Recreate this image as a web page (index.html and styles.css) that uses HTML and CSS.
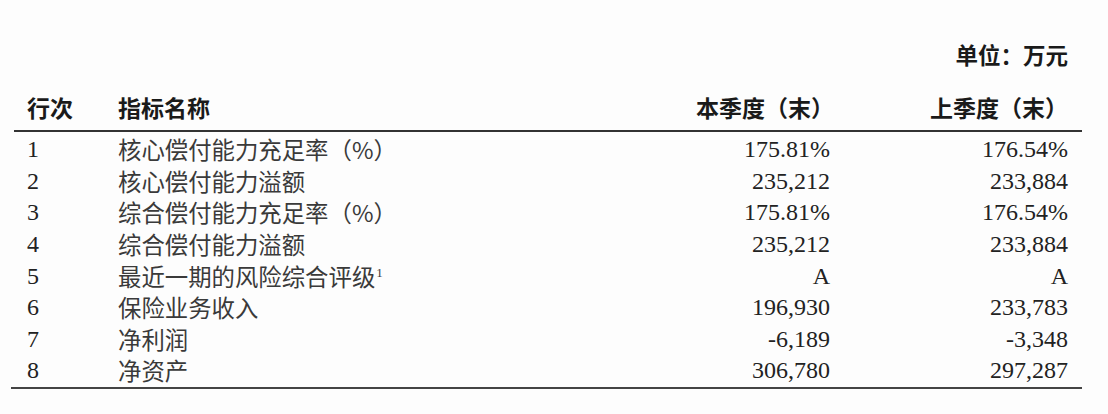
FILE: index.html
```html
<!DOCTYPE html>
<html lang="zh">
<head>
<meta charset="utf-8">
<link rel="stylesheet" href="styles.css">
</head>
<body>
<div class="page">
  <div class="unit">单位：万元</div>
  <div class="row head">
    <div class="c1">行次</div>
    <div class="c2">指标名称</div>
    <div class="c3">本季度（末）</div>
    <div class="c4">上季度（末）</div>
  </div>
  <div class="body">
    <div class="row"><div class="c1 num">1</div><div class="c2">核心偿付能力充足率（%）</div><div class="c3 num">175.81%</div><div class="c4 num">176.54%</div></div>
    <div class="row"><div class="c1 num">2</div><div class="c2">核心偿付能力溢额</div><div class="c3 num">235,212</div><div class="c4 num">233,884</div></div>
    <div class="row"><div class="c1 num">3</div><div class="c2">综合偿付能力充足率（%）</div><div class="c3 num">175.81%</div><div class="c4 num">176.54%</div></div>
    <div class="row"><div class="c1 num">4</div><div class="c2">综合偿付能力溢额</div><div class="c3 num">235,212</div><div class="c4 num">233,884</div></div>
    <div class="row"><div class="c1 num">5</div><div class="c2">最近一期的风险综合评级<sup class="sup">1</sup></div><div class="c3 num">A</div><div class="c4 num">A</div></div>
    <div class="row"><div class="c1 num">6</div><div class="c2">保险业务收入</div><div class="c3 num">196,930</div><div class="c4 num">233,783</div></div>
    <div class="row"><div class="c1 num">7</div><div class="c2">净利润</div><div class="c3 num">-6,189</div><div class="c4 num">-3,348</div></div>
    <div class="row"><div class="c1 num">8</div><div class="c2">净资产</div><div class="c3 num">306,780</div><div class="c4 num">297,287</div></div>
  </div>
</div>
</body>
</html>
```
FILE: styles.css
```css
html, body {
  margin: 0;
  padding: 0;
  background: #fdfdfd;
}
body {
  width: 1108px;
  height: 414px;
  overflow: hidden;
  font-family: "Liberation Serif", "Noto Sans CJK SC", serif;
  color: #2a2a2a;
}
.page {
  padding: 42px 26px 0 14px;
}
.unit {
  text-align: right;
  font-family: "Noto Sans CJK SC", sans-serif;
  font-weight: 700;
  font-size: 22.5px;
  line-height: 24px;
  padding-right: 14px;
  color: #1a1a1a;
}
.row {
  display: grid;
  grid-template-columns: 104px 1fr 200px 238px;
  padding-right: 14px;
  align-items: center;
  height: 31.6px;
}
.row .c1 { padding-left: 13px; }
.row .c3, .row .c4 { text-align: right; }
.head {
  margin-top: 24px;
  height: 40px;
  font-family: "Noto Sans CJK SC", sans-serif;
  font-weight: 700;
  font-size: 23px;
  color: #1a1a1a;
  border-bottom: 2px solid #333;
  align-items: start;
}
.head .c3 { margin-right: -4px; }
.head .c4 { margin-right: 0; }
.body {
  padding-top: 2px;
  border-bottom: 2px solid #444;
  margin-left: -3px;
  padding-left: 3px;
}
.body .c2 {
  font-family: "Noto Sans CJK SC", sans-serif;
  font-size: 23.4px;
  color: #3a3a3a;
  font-weight: 400;
  line-height: 31px;
}
.num {
  font-family: "Liberation Serif", serif;
  font-size: 24px;
  line-height: 31px;
  color: #222;
}
.sup {
  font-family: "Liberation Serif", serif;
  font-size: 13px;
  vertical-align: 9px;
  line-height: 0;
  margin-left: 1px;
}
```
